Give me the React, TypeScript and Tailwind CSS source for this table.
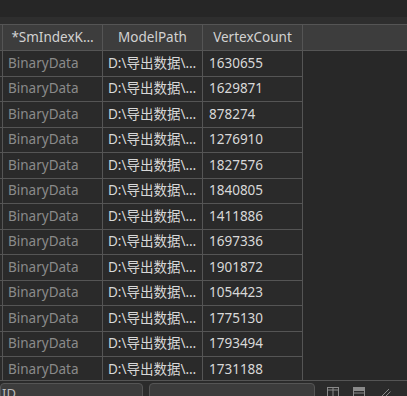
import React from "react";

const counts = [
  "1630655", "1629871", "878274", "1276910", "1827576", "1840805", "1411886",
  "1697336", "1901872", "1054423", "1775130", "1793494", "1731188",
];

const font = { fontFamily: '"Noto Sans", "Noto Sans CJK SC", sans-serif' };

export default function App() {
  return (
    <div className="flex h-[396px] w-[407px] flex-col overflow-hidden bg-[#262626] text-[13.5px]" style={font}>
      {/* top strip */}
      <div className="h-[17px] shrink-0 bg-[#262626]" />
      <div className="h-[7px] shrink-0 bg-[#2e2e2e]" />

      {/* grid */}
      <div className="flex-1 overflow-hidden bg-[#282828]">
        <div className="flex h-[27px] border-t border-b border-[#555] bg-[#3d3d3d] text-[#d2d2d2]">
          <div className="w-[3px] border-r border-[#555]" />
          <div className="flex w-[100px] items-center justify-center border-r border-[#555]">*SmIndexK…</div>
          <div className="flex w-[100px] items-center justify-center border-r border-[#555]">ModelPath</div>
          <div className="flex w-[100px] items-center justify-center border-r border-[#555]">VertexCount</div>
        </div>
        {counts.map((c) => (
          <div key={c} className="flex h-[25.5px] w-[303px] border-b border-[#555] bg-[#2a2a2a] leading-none">
            <div className="w-[3px] border-r border-[#555]" />
            <div className="flex w-[100px] items-center border-r border-[#555] pl-[5px] text-[#8a8a8a]">BinaryData</div>
            <div className="flex w-[100px] items-center border-r border-[#555] pl-[5px] whitespace-nowrap text-[#d8d8d8]">D:\导出数据\…</div>
            <div className="flex w-[100px] items-center border-r border-[#555] pl-[6px] text-[#d8d8d8]">{c}</div>
          </div>
        ))}
      </div>

      {/* bottom bar */}
      <div className="flex h-[16px] shrink-0 items-start gap-[6px] border-t border-[#555] bg-[#2b2b2b] pt-[2px]">
        <div className="h-[20px] w-[143px] overflow-hidden rounded-sm border border-[#555] bg-[#3c3c3c] pl-[1px] text-[13px] leading-[18px] text-[#bbb]">ID</div>
        <div className="h-[20px] w-[166px] rounded-sm border border-[#555] bg-[#3c3c3c]" />
        <div className="ml-[6px] flex items-start gap-[14px] pt-[4px] text-[#8a8a8a]">
          <svg width="12" height="12" viewBox="0 0 12 12" fill="none" stroke="currentColor" strokeWidth="1">
            <rect x="0.5" y="0.5" width="11" height="11" />
            <line x1="6" y1="0.5" x2="6" y2="11.5" />
            <line x1="0.5" y1="3" x2="11.5" y2="3" />
          </svg>
          <svg width="12" height="12" viewBox="0 0 12 12" fill="none" stroke="currentColor" strokeWidth="1">
            <rect x="0.5" y="0.5" width="11" height="11" />
            <rect x="1" y="1" width="10" height="2.5" fill="currentColor" />
            <line x1="0.5" y1="6" x2="11.5" y2="6" />
          </svg>
          <svg width="12" height="12" viewBox="0 0 12 12" fill="none" stroke="currentColor" strokeWidth="1">
            <line x1="2" y1="10" x2="10" y2="2" />
            <line x1="5" y1="11" x2="11.5" y2="4.5" />
          </svg>
        </div>
      </div>
    </div>
  );
}
